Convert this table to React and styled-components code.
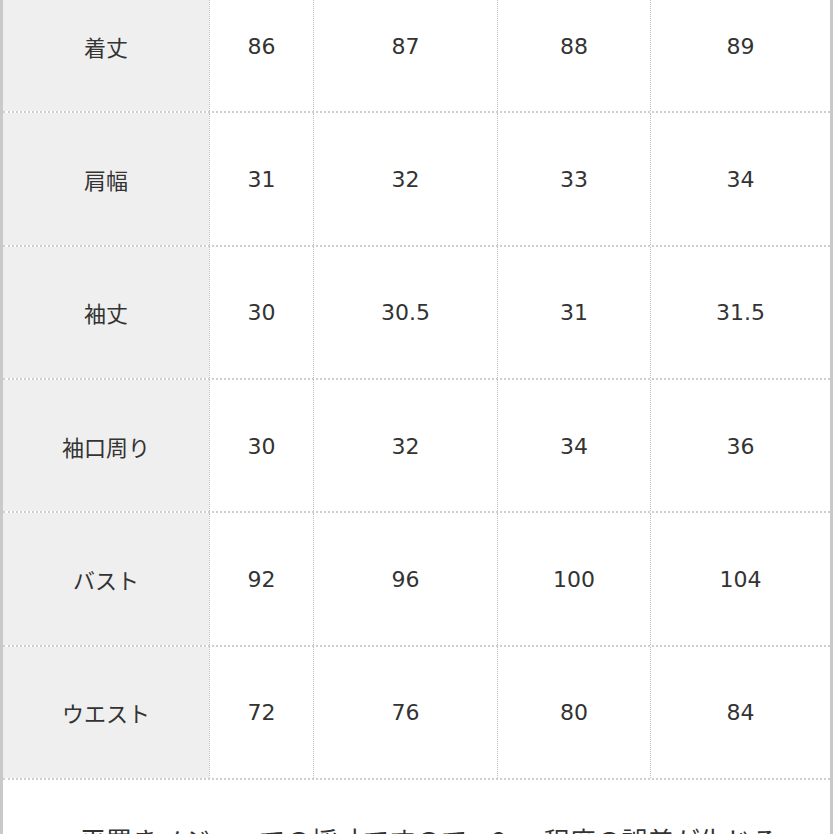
import React from 'react';
import styled, { createGlobalStyle } from 'styled-components';

const rows = [
    { label: '着丈', values: ['86', '87', '88', '89'] },
    { label: '肩幅', values: ['31', '32', '33', '34'] },
    { label: '袖丈', values: ['30', '30.5', '31', '31.5'] },
    { label: '袖口周り', values: ['30', '32', '34', '36'] },
    { label: 'バスト', values: ['92', '96', '100', '104'] },
    { label: 'ウエスト', values: ['72', '76', '80', '84'] },
];

const App = () => {
    return (
        <>
            <Global />
            <Page>
                <Frame>
                    <Table>
                        {rows.map((row) => (
                            <Row key={row.label}>
                                <HeadCell>{row.label}</HeadCell>
                                {row.values.map((v, i) => (
                                    <Cell key={i}>{v}</Cell>
                                ))}
                            </Row>
                        ))}
                    </Table>
                    <Note>平置きメジャーでの採寸ですので、2cm程度の誤差が生じる場合がございます。</Note>
                </Frame>
            </Page>
        </>
    )
}

export default App

const Global = createGlobalStyle`
    html, body {
        margin: 0;
        padding: 0;
        background: #fff;
        overflow: hidden;
    }
`

const Page = styled.div`
    width: 834px;
    height: 834px;
    overflow: hidden;
    background: #fff;
`

const Frame = styled.div`
    width: 833px;
    box-sizing: border-box;
    margin-top: -20px;
    border-left: 3px solid #c9c9c9;
    border-right: 3px solid #c9c9c9;
`

const Table = styled.div`
    display: flex;
    flex-direction: column;
`

const Row = styled.div`
    display: grid;
    grid-template-columns: 206px 104px 184px 153px 180px;
    height: 133.33px;
    box-sizing: border-box;
    border-bottom: 2px dotted #cfcfcf;
`

const Cell = styled.div`
    display: flex;
    align-items: center;
    justify-content: center;
    border-left: 1px dotted #bdbdbd;
    color: #333;
    font-family: "DejaVu Sans", sans-serif;
    font-size: 22px;
    padding-top: 1px;
`

const HeadCell = styled(Cell)`
    border-left: none;
    background: #efefef;
    font-family: "Noto Sans CJK JP", sans-serif;
    font-size: 22px;
    padding-top: 0;
`

const Note = styled.div`
    padding: 40px 40px 40px 77px;
    text-align: left;
    color: #333;
    font-family: "Noto Sans CJK JP", sans-serif;
    font-size: 26px;
    line-height: 1.5;
`
